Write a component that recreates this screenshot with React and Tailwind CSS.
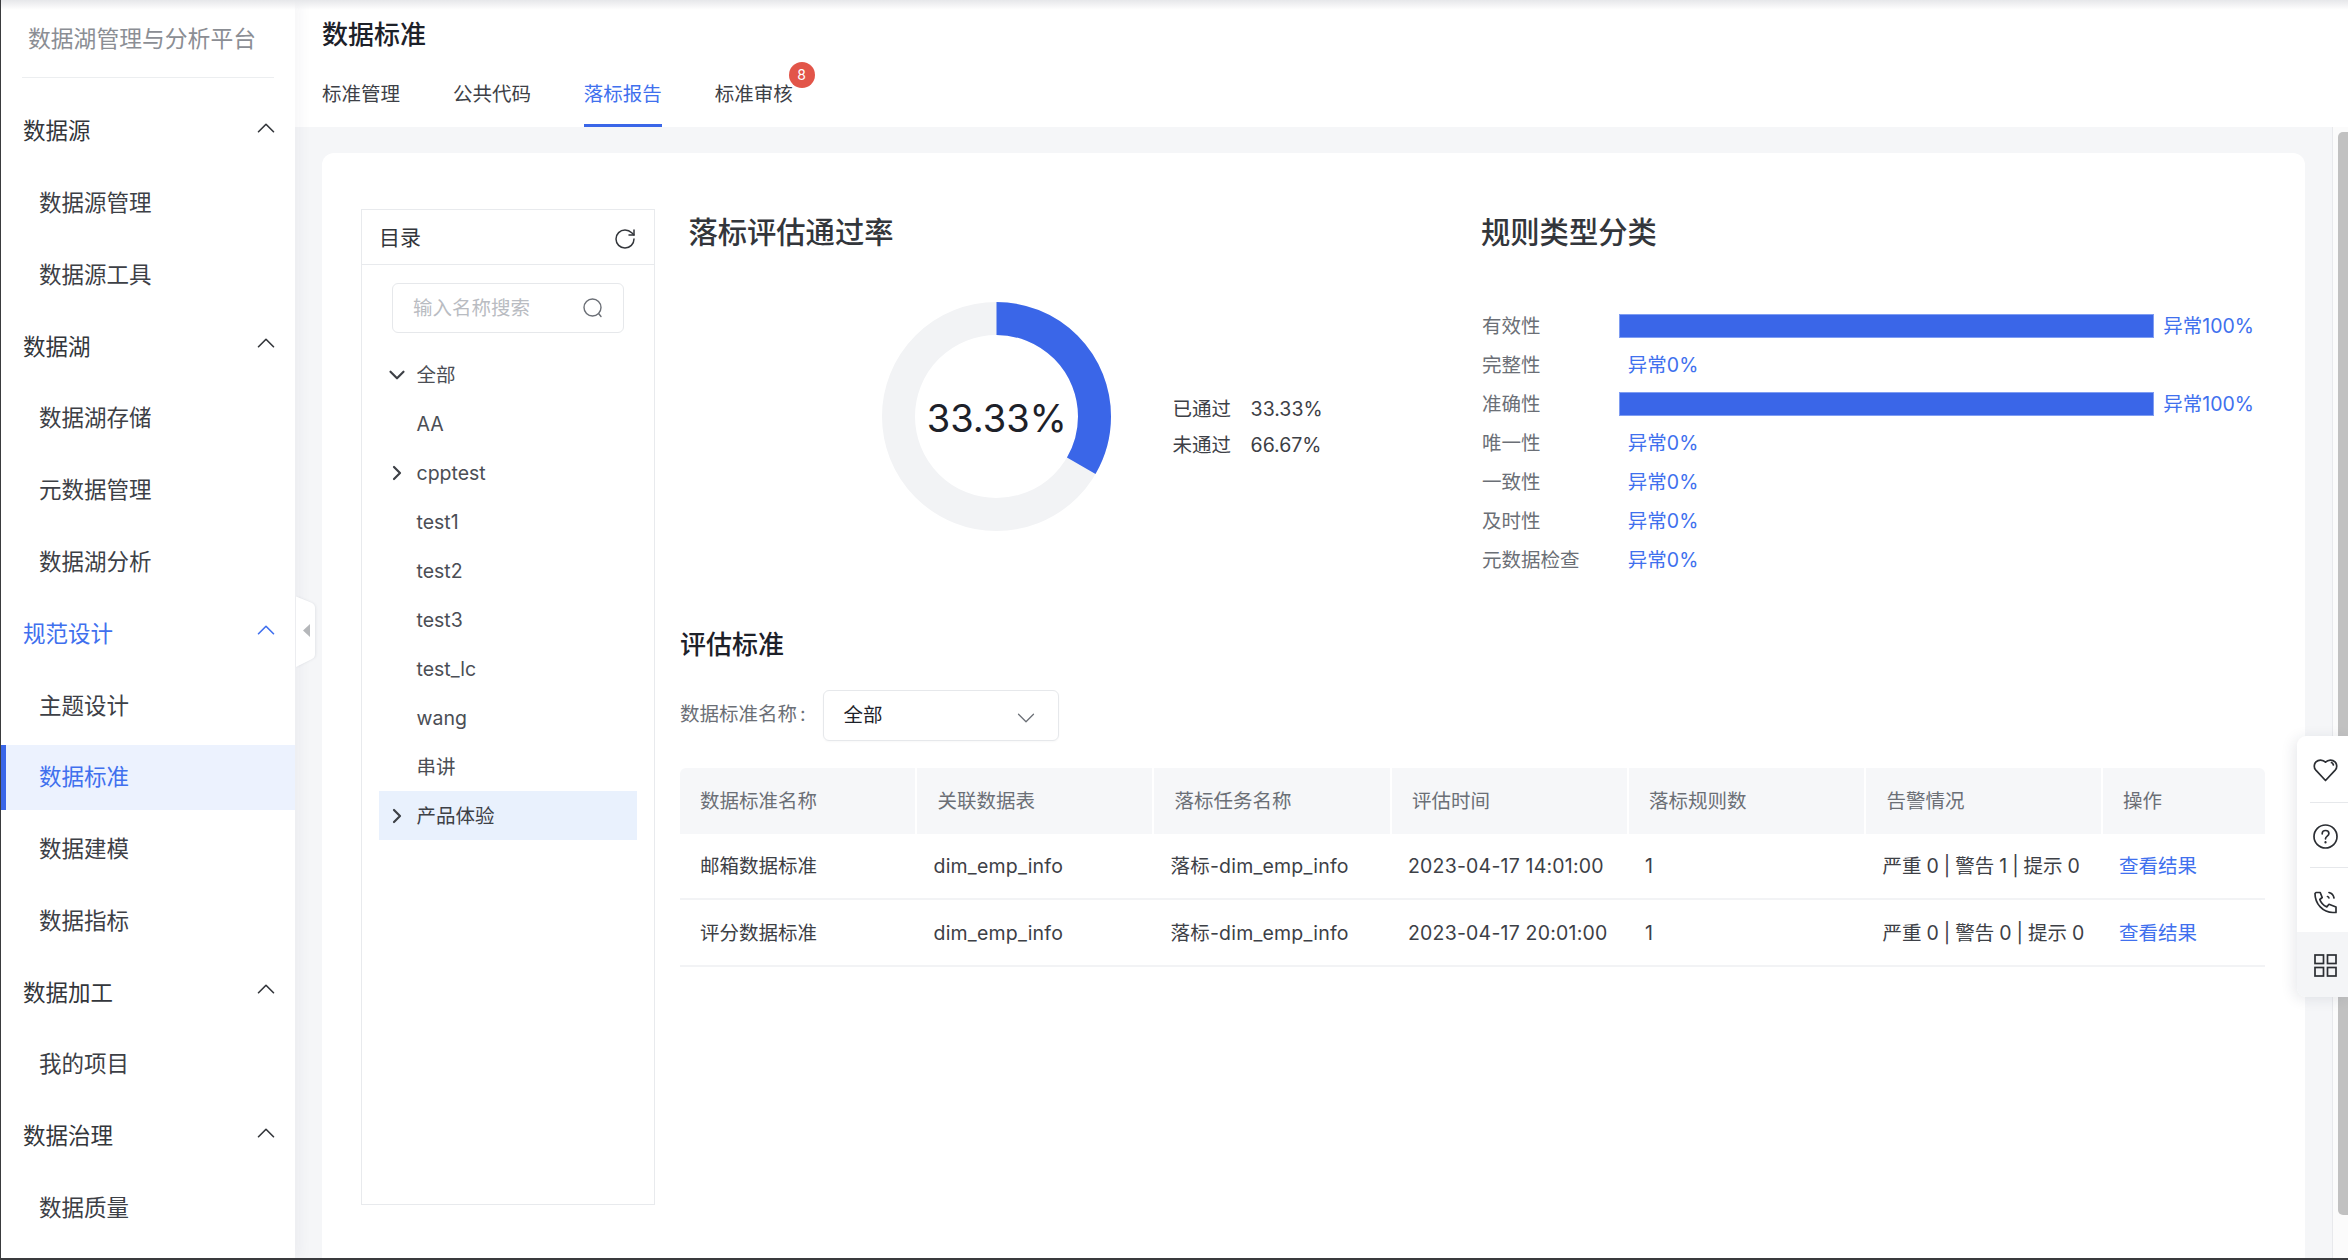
import React from "react";
import { ChevronUp, ChevronDown, ChevronRight, RotateCw } from "lucide-react";

const FONT = "font-['Inter','Noto_Sans_CJK_SC',sans-serif]";

const menu = [
  ["数据源", 0], ["数据源管理", 1], ["数据源工具", 1],
  ["数据湖", 0], ["数据湖存储", 1], ["元数据管理", 1], ["数据湖分析", 1],
  ["规范设计", 2], ["主题设计", 1], ["数据标准", 3], ["数据建模", 1], ["数据指标", 1],
  ["数据加工", 0], ["我的项目", 1],
  ["数据治理", 0], ["数据质量", 1],
];

function Sidebar() {
  return (
    <aside className="relative z-20 flex w-[294px] shrink-0 flex-col bg-white shadow-[4px_0_14px_rgba(30,40,70,0.05)]">
      <div className="mx-[21px] flex h-[78px] shrink-0 items-center border-b border-[#eceef0] pl-[6px]">
        <span className="text-[22.8px] leading-[30px] text-[#8b8e94]">数据湖管理与分析平台</span>
      </div>
      <nav className="mt-[20.5px] flex flex-col gap-[6.8px]">
        {menu.map(([label, kind]) => {
          if (kind === 1 || kind === 3) {
            const active = kind === 3;
            return (
              <div
                key={label}
                className={
                  active
                    ? "flex h-[65px] items-center border-l-[5px] border-[#3a66e8] bg-[#ecf2fe] pl-[33px] text-[22.5px] text-[#4070ee]"
                    : "flex h-[65px] items-center pl-[38px] text-[22.5px] text-[#3d4046]"
                }
              >
                {label}
              </div>
            );
          }
          const blue = kind === 2;
          return (
            <div key={label} className="flex h-[65px] items-center justify-between pl-[22px] pr-[14px]">
              <span className={blue ? "text-[22.5px] text-[#4070ee]" : "text-[22.5px] text-[#33363b]"}>{label}</span>
              <ChevronUp
                size={30}
                strokeWidth={1.3}
                className={blue ? "mt-[-7px] text-[#4070ee]" : "mt-[-7px] text-[#33363b]"}
              />
            </div>
          );
        })}
      </nav>
    </aside>
  );
}

function Header() {
  const tabs = ["标准管理", "公共代码", "落标报告", "标准审核"];
  return (
    <header className="flex h-[127px] shrink-0 flex-col justify-between bg-white pl-[27px]">
      <h1 className="mt-[18px] text-[26px] font-medium leading-[34px] text-[#1d2129]">数据标准</h1>
      <div className="flex gap-[52.4px]">
        {tabs.map((t, i) => (
          <div
            key={t}
            className={
              i === 2
                ? "relative h-[63px] w-[78.5px] border-b-[3.5px] border-[#3a66e8] pt-[17px] text-[19.5px] leading-[26px] text-[#4070ee]"
                : "relative h-[63px] w-[78.5px] pt-[17px] text-[19.5px] leading-[26px] text-[#3d4046]"
            }
          >
            {t}
            {i === 3 && (
              <span className="absolute left-[74px] top-[-2px] flex h-[26px] w-[26px] items-center justify-center rounded-full bg-[#e25549] text-[14px] leading-none text-white">
                8
              </span>
            )}
          </div>
        ))}
      </div>
    </header>
  );
}

const treeRows = [
  ["全部", "down"], ["AA"], ["cpptest", "right"], ["test1"], ["test2"], ["test3"], ["test_lc"], ["wang"], ["串讲"], ["产品体验", "right", true],
];

function Tree() {
  return (
    <section className="flex h-[996px] w-[293.5px] shrink-0 flex-col border border-[#e8eaed]">
      <div className="flex h-[55px] shrink-0 items-center justify-between border-b border-[#e8eaed] pl-[17px] pr-[16.5px]">
        <span className="mt-[2px] text-[21px] leading-[28px] text-[#33363b]">目录</span>
        <RotateCw size={24} strokeWidth={1.5} className="mt-[3px] text-[#33363b]" />
      </div>
      <div className="mx-[30px] mt-[18px] flex h-[50px] shrink-0 items-center justify-between rounded-[6px] border border-[#e6e8eb] pl-[20px] pr-[19px]">
        <span className="text-[19.5px] text-[#b9bcc2]">输入名称搜索</span>
        <svg width="22" height="22" viewBox="0 0 22 22" fill="none" stroke="#6b6f76" strokeWidth="1.4" strokeLinecap="round">
          <circle cx="10.500" cy="10.500" r="8.500" />
          <path d="M16.800 16.800 19 19.500" />
        </svg>
      </div>
      <div className="mx-[16.5px] mt-[17px] flex flex-col">
        {treeRows.map(([label, arrow, hi]) => (
          <div
            key={label}
            className={
              hi
                ? "flex h-[49px] items-center bg-[#e9f1fd] pr-[1px] text-[19.5px] text-[#3d4046]"
                : "flex h-[49px] items-center text-[19.5px] text-[#4b4e55]"
            }
          >
            <span className="flex w-[37px] shrink-0 items-center justify-center">
              {arrow === "down" && <ChevronDown size={26} strokeWidth={2} className="text-[#3d4046]" />}
              {arrow === "right" && <ChevronRight size={24} strokeWidth={2.2} className="text-[#3d4046]" />}
            </span>
            <span className="ml-[1px] pt-[2px]">{label}</span>
          </div>
        ))}
      </div>
    </section>
  );
}

function Donut() {
  const R = 98;
  const c = 2 * Math.PI * R;
  return (
    <div className="relative h-[229px] w-[229px] shrink-0">
      <svg viewBox="0 0 229 229" className="h-full w-full">
        <circle cx="114.5" cy="114.5" r={R} fill="none" stroke="#f2f3f5" strokeWidth="33" />
        <circle
          cx="114.5"
          cy="114.5"
          r={R}
          fill="none"
          stroke="#3a66e8"
          strokeWidth="33"
          strokeDasharray={`${c / 3} ${c}`}
          transform="rotate(-90 114.5 114.5)"
        />
      </svg>
      <div className="absolute inset-0 flex items-center justify-center pl-[1px] pt-[2px] text-[38px] leading-none text-[#1d2129]">
        33.33%
      </div>
    </div>
  );
}

const ruleRows = [
  ["有效性", 100], ["完整性", 0], ["准确性", 100], ["唯一性", 0], ["一致性", 0], ["及时性", 0], ["元数据检查", 0],
];

function Rules() {
  return (
    <div className="flex flex-col">
      <h2 className="h-[40px] pt-[1.5px] text-[29.3px] font-medium leading-[40px] text-[#33363b]">规则类型分类</h2>
      <div className="mt-[55.5px] flex flex-col">
        {ruleRows.map(([label, v]) => (
          <div key={label} className="flex h-[39px] items-center text-[19.5px]">
            <span className="w-[137.5px] shrink-0 pl-[1px] text-[#6b6f76]">{label}</span>
            {v > 0 && <span className="mt-[-2px] h-[23.5px] w-[535.5px] border border-[#7f9df2] bg-[#3a66e8]" />}
            <span className="ml-[9.3px] text-[#4070ee]">异常{v}%</span>
          </div>
        ))}
      </div>
    </div>
  );
}

const headers = ["数据标准名称", "关联数据表", "落标任务名称", "评估时间", "落标规则数", "告警情况", "操作"];
const rows = [
  ["邮箱数据标准", "dim_emp_info", "落标-dim_emp_info", "2023-04-17 14:01:00", "1", "严重 0 | 警告 1 | 提示 0"],
  ["评分数据标准", "dim_emp_info", "落标-dim_emp_info", "2023-04-17 20:01:00", "1", "严重 0 | 警告 0 | 提示 0"],
];
const gridCols = "grid grid-cols-[237px_237px_237.5px_237px_237.5px_236.5px_1fr]";

function DataTable() {
  return (
    <div className="mt-[27px] w-[1585px]">
      <div className={`${gridCols} h-[65.3px] overflow-hidden rounded-t-[6px] text-[19.5px] text-[#6b6f76]`}>
        {headers.map((h, i) => (
          <div
            key={h}
            className={
              i === 0
                ? "flex items-center border-r-2 border-white bg-[#f6f7f9] pl-[20px] pt-[2px]"
                : i === 6
                ? "flex items-center bg-[#f6f7f9] pl-[20.5px] pt-[2px]"
                : "flex items-center border-r-2 border-white bg-[#f6f7f9] pl-[20.5px] pt-[2px]"
            }
          >
            {h}
          </div>
        ))}
      </div>
      {rows.map((r) => (
        <div key={r[0]} className={`${gridCols} h-[66.7px] border-b-2 border-[#f2f3f5] pt-[2px] text-[19.5px] text-[#3d4046]`}>
          {r.map((c, i) => (
            <div
              key={i}
              className={
                i === 0
                  ? "flex items-center pl-[20px]"
                  : i === 5
                  ? "flex items-center whitespace-pre pl-[16.5px] [word-spacing:-0.5px]"
                  : "flex items-center whitespace-nowrap pl-[16.5px] tracking-[0.2px]"
              }
            >
              {c}
            </div>
          ))}
          <div className="flex items-center pl-[16.5px] text-[#4070ee]">查看结果</div>
        </div>
      ))}
    </div>
  );
}

function Report() {
  return (
    <div className="flex min-w-0 flex-1 flex-col pl-[25.5px] pt-[2.5px]">
      <div className="flex">
        <div className="flex w-[801px] shrink-0 flex-col">
          <h2 className="ml-[8.4px] h-[40px] pt-[1.5px] text-[29.3px] font-medium leading-[40px] text-[#33363b]">落标评估通过率</h2>
          <div className="ml-[201.8px] mt-[50.3px] flex items-center">
            <Donut />
            <div className="ml-[61.8px] mt-[21px] grid grid-cols-[78px_auto] gap-y-[9.7px] text-[19.5px] leading-[26px] text-[#3d4046]">
              <span>已通过</span>
              <span>33.33%</span>
              <span>未通过</span>
              <span>66.67%</span>
            </div>
          </div>
        </div>
        <Rules />
      </div>
      <h2 className="mt-[46.5px] text-[26px] font-medium leading-[36px] text-[#1d2129]">评估标准</h2>
      <div className="mt-[27.7px] flex items-center">
        <span className="mt-[-3px] w-[143.4px] shrink-0 text-[19.5px] text-[#6b6f76]">
          数据标准名称<span className="ml-[3px]">:</span>
        </span>
        <div className="flex h-[51px] w-[236px] items-center justify-between rounded-[6px] border border-[#e6e8eb] pl-[19px] pr-[17px] shadow-[0_1px_2px_rgba(0,0,0,0.03)]">
          <span className="text-[19.5px] text-[#1d2129]">全部</span>
          <ChevronDown size={30} strokeWidth={1} className="mt-[4px] text-[#6b6f76]" />
        </div>
      </div>
      <DataTable />
    </div>
  );
}

function FloatingBar() {
  return (
    <div className="absolute right-0 top-[736px] z-30 flex h-[261px] w-[51px] flex-col overflow-hidden rounded-l-[9px] bg-white text-[#2b2e33] shadow-[-3px_2px_14px_rgba(30,40,70,0.10)]">
      <div className="flex h-[65.7px] shrink-0 items-center justify-center pl-[6px] pt-[2px]">
        <svg width="25" height="24" viewBox="0 0 25 24" fill="none" stroke="currentColor" strokeWidth="1.7" strokeLinejoin="round" strokeLinecap="round">
          <path d="M12.5 22.5 2.6 11.8C.7 9.6.9 5.9 3 3.8 5.4 1.5 9.7 1.3 12.5 4.2c2.8-2.9 7.1-2.7 9.5-.4 2.1 2.1 2.3 5.8.4 8L12.5 22.5Z" />
          <path d="M18.5 4.6c1.1.5 1.7 1.3 1.9 2.4" />
        </svg>
      </div>
      <div className="ml-[13px] h-px shrink-0 bg-[#e6e8eb]" />
      <div className="flex h-[64px] shrink-0 items-center justify-center pl-[6px] pt-[4px]">
        <svg width="25" height="25" viewBox="0 0 25 25" fill="none" stroke="currentColor" strokeWidth="1.7" strokeLinecap="round" strokeLinejoin="round">
          <circle cx="12.5" cy="12.5" r="11.5" />
          <path d="M9.2 9.8c0-2 1.5-3.3 3.4-3.3s3.3 1.2 3.3 3c0 2.600-3.400 2.600-3.400 5.300" />
          <path d="M12.5 18.2v.3" strokeWidth="2.200" />
        </svg>
      </div>
      <div className="ml-[13px] h-px shrink-0 bg-[#e6e8eb]" />
      <div className="flex h-[64px] shrink-0 items-center justify-center pl-[6px] pt-[6px]">
        <svg width="23" height="23" viewBox="0 0 23 23" fill="none" stroke="currentColor" strokeWidth="1.7" strokeLinecap="round" strokeLinejoin="round">
          <path d="M2 1.500h4.200l2 5-2.400 2c1 3 3.600 5.900 7 7.400l2.200-2.600 7 2.700v5.500h-3C9 21.500 1 13 1 2.500L2 1.500Z" />
          <path d="M13.500 5.500c.8.200 1.200.6 1.400 1.400" />
          <path d="M15 1.500c2.500.6 4.500 2.600 5 5.500" />
        </svg>
      </div>
      <div className="flex flex-1 items-center justify-center bg-[#f4f5f7] pl-[6px] pt-[2px]">
        <svg width="23" height="23" viewBox="0 0 23 23" fill="none" stroke="currentColor" strokeWidth="1.700">
          <rect x="1" y="1" width="8.500" height="8.500" />
          <rect x="13.500" y="1" width="8.500" height="8.500" />
          <rect x="1" y="13.500" width="8.500" height="8.500" />
          <rect x="13.500" y="13.500" width="8.500" height="8.500" />
        </svg>
      </div>
    </div>
  );
}

function CollapseHandle() {
  return (
    <svg
      width="20"
      height="72"
      viewBox="0 0 20 72"
      className="absolute left-[295px] top-[596px] z-30 drop-shadow-[1px_0_1px_rgba(30,40,70,0.08)]"
    >
      <path d="M0 0.500 15 6.500Q19 8 19 12V58Q19 62 15 63.500L0 71Z" fill="#ffffff" />
      <path d="M7 34.500 14 28V41Z" fill="#b5b7ba" />
    </svg>
  );
}

export default function App() {
  return (
    <div className={`${FONT} relative flex h-[1260px] w-[2348px] overflow-hidden border-b-2 border-l-[1.5px] border-[#3a3b3e] bg-white`}>
      <Sidebar />
      <main className="flex min-w-0 flex-1 flex-col">
        <Header />
        <div className="flex min-h-0 flex-1 bg-[#f5f6f8]">
          <div className="flex min-w-0 flex-1 px-[26.500px] pt-[25.700px]">
            <div className="flex flex-1 rounded-t-[12px] bg-white pl-[39.5px] pt-[56.600px]">
              <Tree />
              <Report />
            </div>
          </div>
          <div className="w-[16.500px] shrink-0 border-l border-[#e8e9ec] bg-[#fbfbfb] pl-[5px] pt-[5px]">
            <div className="h-[1083px] w-[11px] rounded-l-[5px] bg-[#c1c1c1]" />
          </div>
        </div>
      </main>
      <CollapseHandle />
      <FloatingBar />
      <div className="pointer-events-none absolute inset-x-0 top-0 z-40 h-[10px] bg-gradient-to-b from-[#e6e7ea] to-transparent" />
    </div>
  );
}
